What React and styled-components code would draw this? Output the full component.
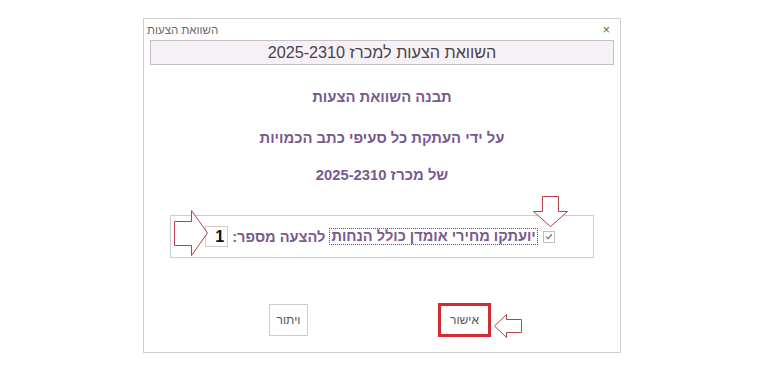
import React from "react";
import styled, { createGlobalStyle } from "styled-components";

const GlobalStyle = createGlobalStyle`
  html, body {
    margin: 0;
    padding: 0;
    background: #fff;
    font-family: "Liberation Sans", Arial, sans-serif;
  }
`;

const Page = styled.div`
  width: 768px;
  height: 374px;
  padding: 18px 0 0 143px;
  box-sizing: border-box;
`;

const Dialog = styled.div`
  width: 478px;
  height: 335px;
  box-sizing: border-box;
  border: 1px solid #cfcfcf;
  display: flex;
  flex-direction: column;
`;

const TitleBar = styled.div`
  height: 21px;
  display: flex;
  align-items: center;
  justify-content: space-between;
  padding: 0 10px 0 3px;
  color: #6a6a6a;
  font-size: 11.5px;
`;

const Close = styled.span`
  font-size: 13px;
  color: #666;
`;

const Header = styled.div`
  margin: 0 6px;
  height: 25px;
  box-sizing: border-box;
  border: 1px solid #c4c0c4;
  background: #f6f1f6;
  display: flex;
  align-items: center;
  justify-content: center;
  color: #4b414b;
  font-size: 16.2px;
`;

const Line = styled.div`
  margin-top: ${(p) => p.$top}px;
  height: 20px;
  line-height: 20px;
  text-align: center;
  color: #785a8e;
  font-weight: bold;
  font-size: 14.8px;
`;

const OptionBox = styled.div`
  position: relative;
  margin: 30px 26px 0 26px;
  height: 43px;
  box-sizing: border-box;
  border: 1px solid #cdcdcd;
  display: flex;
  align-items: center;
  justify-content: center;
  gap: 4px;
  padding-right: 4px;
  color: #785a8e;
  font-weight: bold;
  font-size: 14.6px;
`;

const Check = styled.span`
  width: 10px;
  height: 10px;
  border: 1px solid #bdbdbd;
  display: inline-flex;
  align-items: center;
  justify-content: center;
  background: #fff;
  margin-left: 1px;
`;

const Dotted = styled.span`
  border: 1px dotted #555;
  padding: 0 1px;
  line-height: 15px;
`;

const Field = styled.span`
  width: 23px;
  height: 21px;
  box-sizing: border-box;
  border: 1px solid #cccccc;
  display: inline-flex;
  align-items: center;
  justify-content: flex-start;
  padding-right: 3px;
  color: #111;
  font-weight: bold;
  font-size: 16px;
`;

const Arrow = styled.svg`
  position: absolute;
  left: ${(p) => p.$left}px;
  top: ${(p) => p.$top}px;
`;

const Buttons = styled.div`
  margin-top: 45px;
  display: flex;
  align-items: center;
  justify-content: center;
  gap: 130px;
  padding-right: 4px;
`;

const Button = styled.div`
  position: relative;
  width: ${(p) => p.$w}px;
  height: ${(p) => p.$h}px;
  box-sizing: border-box;
  border: ${(p) => (p.$hot ? "3px solid #d42a36" : "1px solid #cccccc")};
  display: flex;
  align-items: center;
  justify-content: center;
  color: #555;
  font-size: 12px;
`;

const stroke = "#b8424c";

const App = () => (
  <>
    <GlobalStyle />
    <Page>
      <Dialog>
        <TitleBar>
          <span dir="rtl">השוואת הצעות</span>
          <Close>×</Close>
        </TitleBar>
        <Header dir="rtl">השוואת הצעות למכרז 2025-2310</Header>
        <Line dir="rtl" $top={22}>תבנה השוואת הצעות</Line>
        <Line dir="rtl" $top={21}>על ידי העתקת כל סעיפי כתב הכמויות</Line>
        <Line dir="rtl" $top={17}>של מכרז 2025-2310</Line>
        <OptionBox dir="rtl">
          <Check>
            <svg width="8" height="7" viewBox="0 0 8 7">
              <path d="M1 3.6 L3 5.6 L7 1.2" fill="none" stroke="#777" strokeWidth="1.3" />
            </svg>
          </Check>
          <Dotted>יועתקו מחירי אומדן כולל הנחות</Dotted>
          <span>להצעה מספר:</span>
          <Field>1</Field>
          <Arrow $left={362} $top={-20} width="36" height="32" viewBox="0 0 36 32">
            <polygon
              points="9.5,0.5 25.5,0.5 25.5,15.5 34.5,15.5 17.5,30.5 0.5,15.5 9.5,15.5"
              fill="#fff"
              stroke={stroke}
            />
          </Arrow>
          <Arrow $left={3} $top={-6} width="35" height="46" viewBox="0 0 35 46">
            <polygon
              points="0.5,11.5 17.5,11.5 17.5,0.5 33.5,23 17.5,45.5 17.5,35.5 0.5,35.5"
              fill="#fff"
              stroke={stroke}
            />
          </Arrow>
        </OptionBox>
        <Buttons dir="rtl">
          <Button $hot $w={53} $h={34}>
            אישור
            <Arrow $left={53} $top={8} width="29" height="24" viewBox="0 0 29 24">
              <polygon
                points="0.5,12 12.5,0.5 12.5,5.5 27.5,5.5 27.5,18.5 12.5,18.5 12.5,23.5"
                fill="#fff"
                stroke={stroke}
              />
            </Arrow>
          </Button>
          <Button $w={39} $h={32}>ויתור</Button>
        </Buttons>
      </Dialog>
    </Page>
  </>
);

export default App;
